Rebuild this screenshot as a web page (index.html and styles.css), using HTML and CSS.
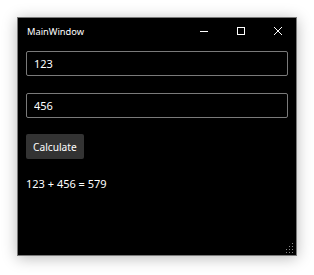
FILE: index.html
```html
<!DOCTYPE html>
<html lang="en">

<head>
  <meta charset="UTF-8" />
  <title>MainWindow</title>
  <link rel="stylesheet" href="styles.css">
</head>

<body>
  <div class="window">
    <div class="title-bar">
      <span class="title">MainWindow</span>
      <div class="caption-buttons">
        <button class="caption-btn" title="Minimize">
          <svg width="10" height="10" viewBox="0 0 10 10">
            <line x1="1" y1="5.5" x2="9" y2="5.5" stroke="#fff" stroke-width="1" />
          </svg>
        </button>
        <button class="caption-btn" title="Maximize">
          <svg width="10" height="10" viewBox="0 0 10 10">
            <rect x="1.5" y="1.5" width="7" height="7" fill="none" stroke="#fff" stroke-width="1" />
          </svg>
        </button>
        <button class="caption-btn" title="Close">
          <svg width="10" height="10" viewBox="0 0 10 10">
            <path d="M1 1 L9 9 M9 1 L1 9" stroke="#fff" stroke-width="1" />
          </svg>
        </button>
      </div>
    </div>

    <div class="content">
      <input type="text" class="text-box" value="123" />
      <input type="text" class="text-box" value="456" />
      <button class="calc-btn">Calculate</button>
      <p class="result">123 + 456 = 579</p>
    </div>

    <svg class="grip" width="10" height="10" viewBox="0 0 10 10">
      <rect x="8" y="0" width="1" height="1" fill="#888" />
      <rect x="8" y="3" width="1" height="1" fill="#888" />
      <rect x="5" y="3" width="1" height="1" fill="#888" />
      <rect x="8" y="6" width="1" height="1" fill="#888" />
      <rect x="5" y="6" width="1" height="1" fill="#888" />
      <rect x="2" y="6" width="1" height="1" fill="#888" />
      <rect x="8" y="9" width="1" height="1" fill="#888" />
      <rect x="5" y="9" width="1" height="1" fill="#888" />
      <rect x="2" y="9" width="1" height="1" fill="#888" />
    </svg>
  </div>
</body>

</html>
```

FILE: styles.css
```css
* {
  margin: 0;
  padding: 0;
  box-sizing: border-box;
}

body {
  font-family: 'Noto Sans', 'Open Sans', sans-serif;
  background-color: #ffffff;
  padding: 17px;
}

.window {
  position: relative;
  width: 280px;
  height: 239px;
  background-color: #000000;
  border: 1px solid #7a7a7a;
  box-shadow: 0 2px 14px rgba(0, 0, 0, 0.28);
  color: #ffffff;
}

.title-bar {
  height: 26px;
  display: flex;
  justify-content: space-between;
  align-items: center;
}

.title {
  font-size: 9.3px;
  padding-left: 9px;
}

.caption-buttons {
  display: flex;
  height: 100%;
}

.caption-btn {
  width: 37px;
  height: 100%;
  background: none;
  border: none;
  display: flex;
  align-items: center;
  justify-content: center;
}

.content {
  padding: 7px 8px;
  display: flex;
  flex-direction: column;
  align-items: flex-start;
}

.text-box {
  width: 100%;
  height: 25px;
  margin-bottom: 17px;
  padding: 0 7px;
  font-family: inherit;
  font-size: 11px;
  color: #ffffff;
  background-color: #000000;
  border: 1px solid #7a7a7a;
  border-radius: 2px;
  outline: none;
}

.text-box:last-of-type {
  margin-bottom: 16px;
}

.calc-btn {
  height: 25px;
  padding: 0 7px;
  font-family: inherit;
  font-size: 10.2px;
  color: #ffffff;
  background-color: #333333;
  border: none;
  border-radius: 2px;
}

.result {
  margin-top: 17px;
  font-size: 11px;
  line-height: 16px;
}

.grip {
  position: absolute;
  right: 2px;
  bottom: 2px;
}
```
